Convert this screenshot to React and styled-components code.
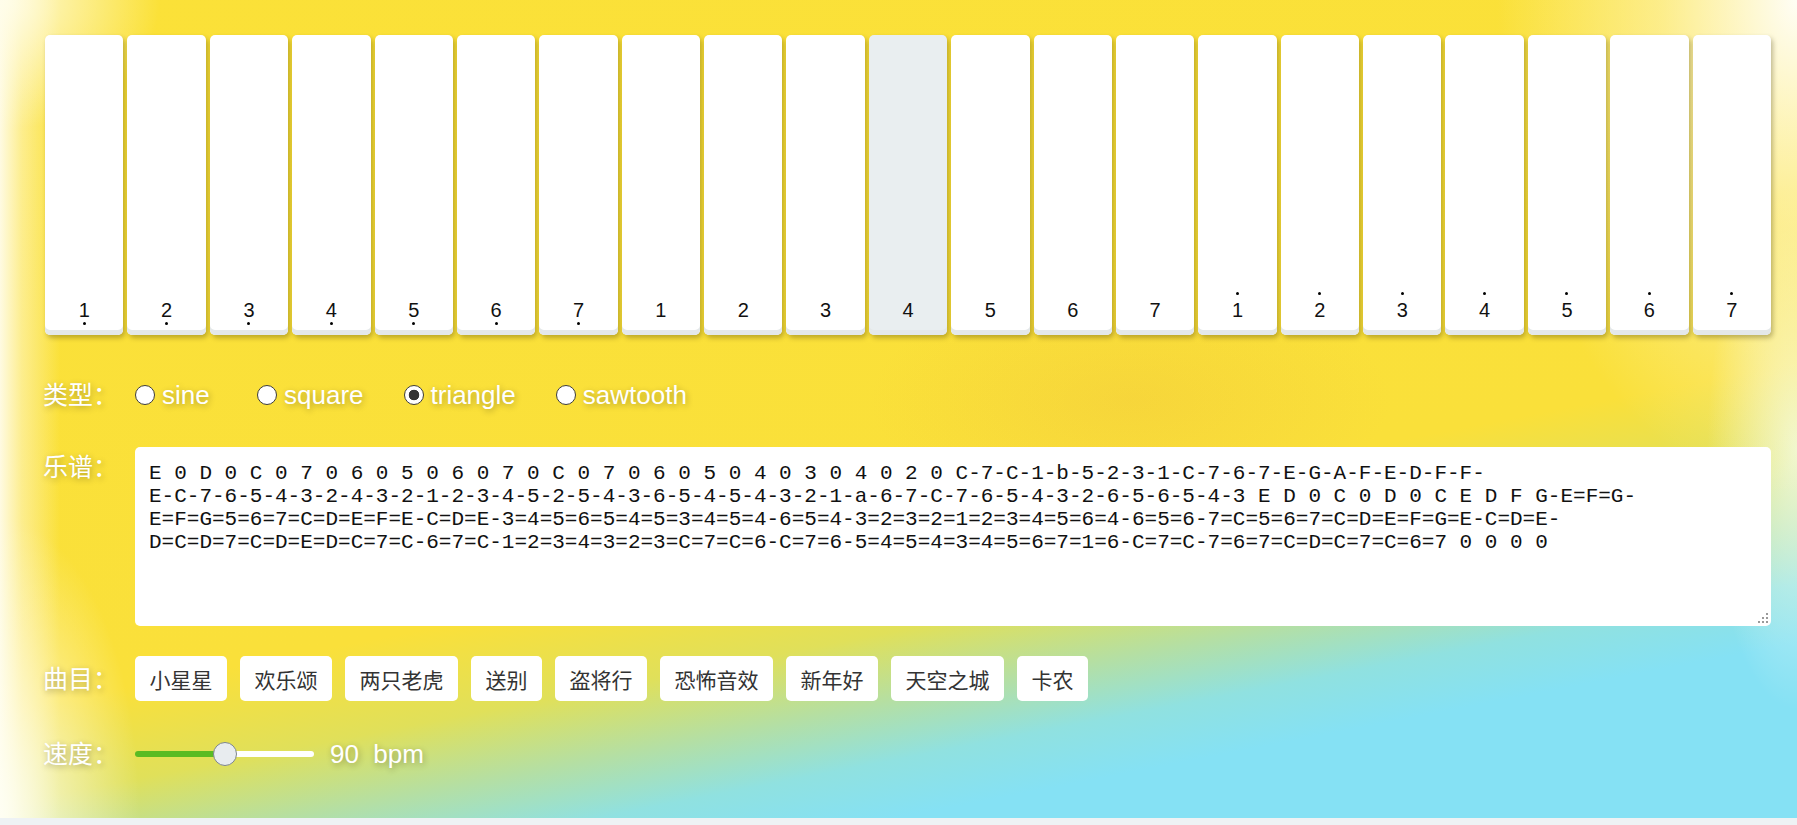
import React, { useState } from 'react';
import styled, { createGlobalStyle } from 'styled-components';

const GlobalStyle = createGlobalStyle`
  html, body {
    margin: 0;
    padding: 0;
  }
  body {
    background: #eef2f4;
    font-family: "Liberation Sans", "Noto Sans CJK SC", sans-serif;
  }
`;

const Page = styled.div`
  min-height: 818px;
  box-sizing: border-box;
  padding: 35px 26px 0 43px;
  background:
    radial-gradient(ellipse 300px 500px at 100% 0%, rgba(255, 255, 255, 0.95) 0%, rgba(255, 250, 220, 0.5) 45%, rgba(255, 255, 255, 0) 100%),
    radial-gradient(ellipse 90px 260px at 100% 55%, rgba(245, 255, 245, 0.75) 0%, rgba(255, 255, 255, 0) 100%),
    radial-gradient(ellipse 140px 300px at 0% 100%, rgba(255, 255, 245, 0.9) 0%, rgba(255, 255, 255, 0) 100%),
    radial-gradient(ellipse 160px 130px at 0% 0%, rgba(255, 253, 235, 0.95) 0%, rgba(255, 255, 255, 0) 100%),
    radial-gradient(ellipse 260px 120px at 1130px 400px, rgba(238, 190, 60, 0.3) 0%, rgba(238, 190, 60, 0) 100%),
    linear-gradient(90deg, rgba(255, 252, 235, 0.95) 0px, rgba(255, 250, 225, 0.5) 22px, rgba(255, 255, 255, 0) 60px),
    linear-gradient(169deg, #fbe138 0%, #fae03a 61%, #e0e05a 69%, #b4dfa4 75%, #90e1e0 80%, #85e1f4 85%, #85e1f4 100%);
`;

const Keyboard = styled.div`
  display: flex;
  gap: 4px;
  height: 300px;
  margin-left: 2px;
`;

const Key = styled.div`
  flex: 1;
  box-sizing: border-box;
  background: ${props => (props.$active ? '#e9eef0' : '#ffffff')};
  border-radius: 5px;
  box-shadow: inset 0 -5px 0 #e4e8e9, 2px 3px 5px rgba(60, 50, 0, 0.32);
  display: flex;
  flex-direction: column;
  justify-content: flex-end;
  align-items: center;
  padding-bottom: 10px;
  font-family: "Liberation Sans", Arial, sans-serif;
  color: #111;
`;

const Dot = styled.span`
  width: 3px;
  height: 3px;
  border-radius: 50%;
  background: #000;
  visibility: ${props => (props.$show ? 'visible' : 'hidden')};
  margin-top: ${props => (props.$below ? '2px' : '0')};
  margin-bottom: ${props => (props.$below ? '0' : '5px')};
`;

const Digit = styled.span`
  font-size: 20px;
  line-height: 20px;
`;

const Row = styled.div`
  display: flex;
  align-items: ${props => (props.$top ? 'flex-start' : 'center')};
  margin-top: ${props => props.$mt}px;
`;

const Label = styled.div`
  width: 92px;
  flex-shrink: 0;
  font-size: 25px;
  line-height: 40px;
  color: #fff;
  text-shadow: 1px 2px 6px rgba(0, 0, 0, 0.3);
`;

const RadioGroup = styled.div`
  display: flex;
  align-items: center;
`;

const RadioItem = styled.label`
  display: inline-flex;
  align-items: center;
  gap: 7px;
  margin-right: 40px;
  cursor: pointer;
`;

const RadioInput = styled.input`
  appearance: none;
  box-sizing: border-box;
  width: 20px;
  height: 20px;
  margin: 0;
  border: 1px solid #3c3c3c;
  border-radius: 50%;
  background: #fff;
  &:checked {
    background: radial-gradient(circle, #333 0, #333 5px, #fff 5.6px);
  }
`;

const RadioText = styled.span`
  min-width: 55px;
  font-size: 26px;
  color: #fff;
  text-shadow: 1px 2px 6px rgba(0, 0, 0, 0.3);
`;

const ScoreBox = styled.div`
  position: relative;
  flex: 1;
`;

const ScoreArea = styled.textarea`
  display: block;
  width: 100%;
  height: 179px;
  box-sizing: border-box;
  border: none;
  border-radius: 5px;
  padding: 15px 14px;
  background: #fff;
  color: #111;
  font-family: "Liberation Mono", "Courier New", monospace;
  font-size: 21px;
  line-height: 23px;
  white-space: pre-wrap;
  resize: none;
  outline: none;
`;

const Grip = styled.svg`
  position: absolute;
  right: 3px;
  bottom: 3px;
`;

const Songs = styled.div`
  display: flex;
  gap: 13px;
`;

const SongButton = styled.button`
  height: 45px;
  padding: 0 14.5px;
  border: none;
  border-radius: 5px;
  background: #fff;
  color: #333;
  font-family: "Noto Sans CJK SC", sans-serif;
  font-size: 21px;
  cursor: pointer;
`;

const Slider = styled.input`
  appearance: none;
  width: 179px;
  height: 24px;
  margin: 0;
  background: transparent;
  &::-webkit-slider-runnable-track {
    height: 6px;
    border-radius: 3px;
    background: linear-gradient(to right, #5abb22 var(--pct), #fff var(--pct));
  }
  &::-webkit-slider-thumb {
    appearance: none;
    box-sizing: border-box;
    width: 24px;
    height: 24px;
    margin-top: -9px;
    border-radius: 50%;
    background: #e8ecef;
    border: 1.5px solid #7d858b;
  }
`;

const Bpm = styled.span`
  margin-left: 16px;
  font-size: 26px;
  color: #fff;
  white-space: pre;
  text-shadow: 1px 2px 6px rgba(0, 0, 0, 0.3);
`;

const octaves = ['low', 'mid', 'high'];
const keys = octaves.flatMap(o => [1, 2, 3, 4, 5, 6, 7].map(n => ({ n, o })));

const waves = ['sine', 'square', 'triangle', 'sawtooth'];
const songs = ['小星星', '欢乐颂', '两只老虎', '送别', '盗将行', '恐怖音效', '新年好', '天空之城', '卡农'];

const score = [
    'E 0 D 0 C 0 7 0 6 0 5 0 6 0 7 0 C 0 7 0 6 0 5 0 4 0 3 0 4 0 2 0 C-7-C-1-b-5-2-3-1-C-7-6-7-E-G-A-F-E-D-F-F-',
    'E-C-7-6-5-4-3-2-4-3-2-1-2-3-4-5-2-5-4-3-6-5-4-5-4-3-2-1-a-6-7-C-7-6-5-4-3-2-6-5-6-5-4-3 E D 0 C 0 D 0 C E D F G-E=F=G-',
    'E=F=G=5=6=7=C=D=E=F=E-C=D=E-3=4=5=6=5=4=5=3=4=5=4-6=5=4-3=2=3=2=1=2=3=4=5=6=4-6=5=6-7=C=5=6=7=C=D=E=F=G=E-C=D=E-',
    'D=C=D=7=C=D=E=D=C=7=C-6=7=C-1=2=3=4=3=2=3=C=7=C=6-C=7=6-5=4=5=4=3=4=5=6=7=1=6-C=7=C-7=6=7=C=D=C=7=C=6=7 0 0 0 0'
].join('\n');

function App() {
    const [wave, setWave] = useState('triangle')
    const [bpm, setBpm] = useState(90)
    const [text, setText] = useState(score)

    const min = 40;
    const max = 140;
    const pct = (12 + ((bpm - min) / (max - min)) * 155) / 179 * 100;

    return (
        <Page>
            <GlobalStyle />
            <Keyboard>
                {keys.map((k, i) => (
                    <Key key={i} $active={i === 10}>
                        <Dot $show={k.o === 'high'} />
                        <Digit>{k.n}</Digit>
                        <Dot $below $show={k.o === 'low'} />
                    </Key>
                ))}
            </Keyboard>

            <Row $mt={40}>
                <Label>类型：</Label>
                <RadioGroup>
                    {waves.map(w => (
                        <RadioItem key={w}>
                            <RadioInput type="radio" name="wave" checked={wave === w} onChange={() => setWave(w)} />
                            <RadioText>{w}</RadioText>
                        </RadioItem>
                    ))}
                </RadioGroup>
            </Row>

            <Row $mt={32} $top>
                <Label>乐谱：</Label>
                <ScoreBox>
                    <ScoreArea value={text} onChange={e => setText(e.target.value)} spellCheck={false} />
                    <Grip width="11" height="11" viewBox="0 0 11 11">
                        {[[9, 1], [5, 5], [9, 5], [1, 9], [5, 9], [9, 9]].map(([x, y], i) => (
                            <rect key={i} x={x} y={y} width="2" height="2" fill="#9a9a9a" />
                        ))}
                    </Grip>
                </ScoreBox>
            </Row>

            <Row $mt={30}>
                <Label>曲目：</Label>
                <Songs>
                    {songs.map(s => (
                        <SongButton key={s}>{s}</SongButton>
                    ))}
                </Songs>
            </Row>

            <Row $mt={33}>
                <Label>速度：</Label>
                <Slider
                    type="range"
                    min={min}
                    max={max}
                    value={bpm}
                    onChange={e => setBpm(Number(e.target.value))}
                    style={{ '--pct': `${pct}%` }}
                />
                <Bpm>{bpm}  bpm</Bpm>
            </Row>
        </Page>
    )
}

export default App;
